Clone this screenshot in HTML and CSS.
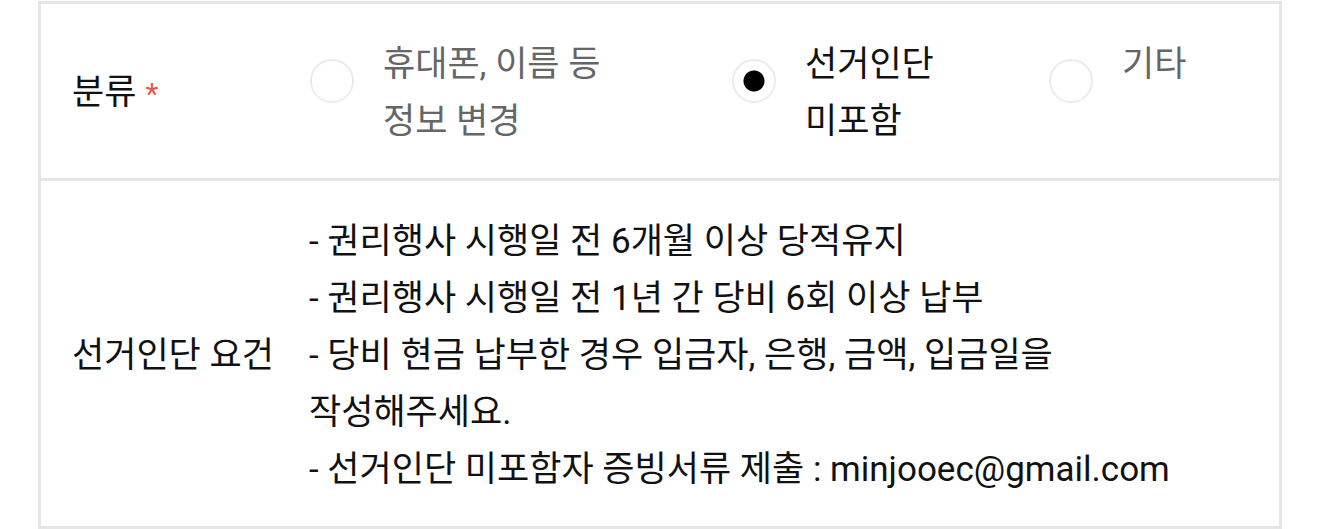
FILE: index.html
```html
<!DOCTYPE html>
<html lang="ko">
<head>
    <meta charset="utf-8">
    <link rel="stylesheet" href="styles.css">
</head>
<body>
    <table class="form-table">
        <tr>
            <th class="field-label">분류<span class="required">*</span></th>
            <td class="field-value">
                <div class="radio-group">
                    <label class="radio-option">
                        <input type="radio" name="category" value="info">
                        <span class="radio-text">휴대폰, 이름 등 정보 변경</span>
                    </label>
                    <label class="radio-option">
                        <input type="radio" name="category" value="excluded" checked>
                        <span class="radio-text">선거인단 미포함</span>
                    </label>
                    <label class="radio-option">
                        <input type="radio" name="category" value="etc">
                        <span class="radio-text">기타</span>
                    </label>
                </div>
            </td>
        </tr>
        <tr>
            <th class="field-label">선거인단 요건</th>
            <td class="field-value">
                <p class="notice">
                    - 권리행사 시행일 전 6개월 이상 당적유지<br>
                    - 권리행사 시행일 전 1년 간 당비 6회 이상 납부<br>
                    - 당비 현금 납부한 경우 입금자, 은행, 금액, 입금일을 작성해주세요.<br>
                    - 선거인단 미포함자 증빙서류 제출 : minjooec@gmail.com
                </p>
            </td>
        </tr>
    </table>
</body>
</html>
```

FILE: styles.css
```css
body {
    margin: 0;
    padding: 1px 38px 0;
    background-color: #FFF;
    font-family: Roboto, 'Noto Sans CJK KR', sans-serif;
    font-size: 35px;
    line-height: 57px;
    color: #111;
    word-break: keep-all;
}
.form-table {
    box-sizing: border-box;
    width: 100%;
    table-layout: fixed;
    border: 3px solid #E6E6E6;
    border-spacing: 0;
}
.form-table tr:first-child th,
.form-table tr:first-child td {
    border-bottom: 3px solid #E6E6E6;
}
.field-label {
    box-sizing: border-box;
    width: 268px;
    padding: 32px 0 28px 31px;
    text-align: left;
    font-weight: normal;
    vertical-align: middle;
    white-space: nowrap;
}
.required {
    margin-left: 9px;
    color: #E8574F;
    font-size: 30px;
}
.field-value {
    padding: 32px 60px 28px 0;
    vertical-align: top;
}
.radio-group {
    display: grid;
    grid-template-columns: 422px 317px 1fr;
}
.radio-option {
    display: flex;
    align-items: flex-start;
    gap: 29px;
    cursor: pointer;
}
.radio-option input[type="radio"] {
    appearance: none;
    -webkit-appearance: none;
    flex: none;
    width: 44px;
    height: 44px;
    margin: 23px 0 0 1px;
    border: 2px solid #EBEBEB;
    border-radius: 50%;
    background-color: #FFF;
    cursor: pointer;
}
.radio-option input[type="radio"]:checked {
    background: radial-gradient(circle, #000 10px, #FFF 11px);
}
.radio-text {
    width: 232px;
    color: #666;
}
.radio-option input[type="radio"]:checked + .radio-text {
    color: #111;
}
.notice {
    margin: 0;
}
```
